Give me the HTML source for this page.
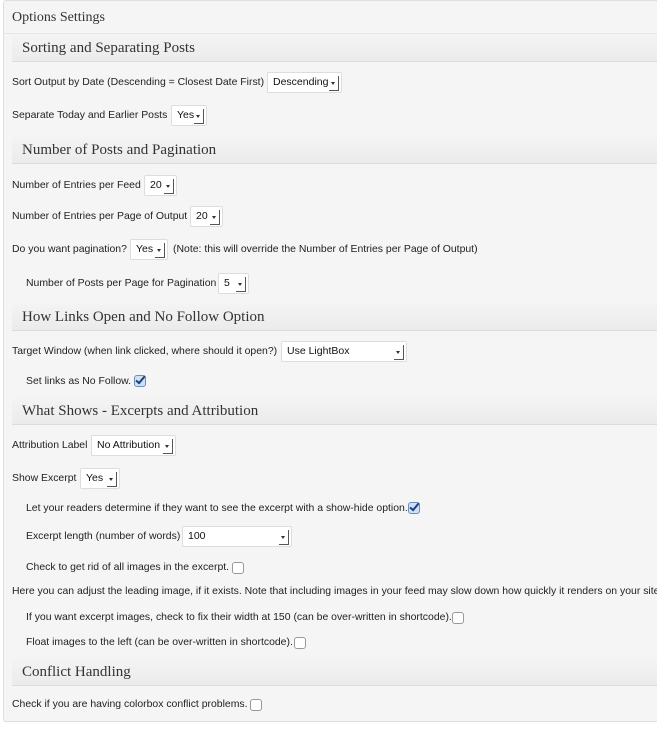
<!DOCTYPE html>
<html><head><style>
body{margin:0;width:657px;height:731px;background:#fff;position:relative;overflow:hidden;font-family:"Liberation Sans",Arial,sans-serif;font-size:10.45px;color:#222}
#box{position:absolute;left:3px;top:0;width:670px;height:720px;background:#f5f5f5;border:1px solid #dfdfdf;border-radius:3px}
.t{position:absolute;white-space:nowrap;line-height:14px;margin-top:1px}
.h{position:absolute;left:12px;width:660px;height:28px;background:linear-gradient(#f4f4f4,#ebebeb);border-bottom:1px solid #dcdcdc;font-family:"Liberation Serif",serif;font-size:15px;color:#333;line-height:28px;padding-left:10px;box-sizing:border-box}
.s{position:absolute;height:21px;background:#fff;border:1px solid #ddd;border-radius:2px;box-sizing:border-box;line-height:19px;padding-left:5px;font-size:10.5px;color:#111}
.s i{position:absolute;right:2px;top:3px;width:9px;height:14px;border-right:1px solid #555;border-bottom:1px solid #555}
.s i:after{content:"";position:absolute;left:2px;top:6px;border-left:2.5px solid transparent;border-right:2.5px solid transparent;border-top:3px solid #333}
.c{position:absolute;width:10px;height:10px;border:1px solid #999;border-radius:3px;background:#fff}
.c.k{background:#cfe0f5;border-color:#6d8fbf}
.c.k:after{content:"";position:absolute;left:3px;top:-2px;width:3px;height:8px;border-right:2px solid #1d3f7a;border-bottom:2px solid #1d3f7a;transform:rotate(40deg)}
</style></head><body>
<div id="box"></div>
<div style="position:absolute;left:3px;top:33px;width:670px;border-top:1px solid #e6e6e6"></div>
<div class="t" style="left:12px;top:9px;font-family:'Liberation Serif',serif;font-size:14px;color:#333;line-height:16px">Options Settings</div>

<div class="h" style="top:34px">Sorting and Separating Posts</div>
<div class="t" style="left:12px;top:75px">Sort Output by Date (Descending = Closest Date First)</div>
<div class="s" style="left:267px;top:72px;width:75px">Descending<i></i></div>
<div class="t" style="left:12px;top:108px">Separate Today and Earlier Posts</div>
<div class="s" style="left:171px;top:105px;width:36px">Yes<i></i></div>

<div class="h" style="top:136px">Number of Posts and Pagination</div>
<div class="t" style="left:12px;top:178px">Number of Entries per Feed</div>
<div class="s" style="left:144px;top:175px;width:33px">20<i></i></div>
<div class="t" style="left:12px;top:209px">Number of Entries per Page of Output</div>
<div class="s" style="left:190px;top:206px;width:33px">20<i></i></div>
<div class="t" style="left:12px;top:242px">Do you want pagination?</div>
<div class="s" style="left:130px;top:239px;width:38px">Yes<i></i></div>
<div class="t" style="left:173px;top:242px">(Note: this will override the Number of Entries per Page of Output)</div>
<div class="t" style="left:26px;top:276px">Number of Posts per Page for Pagination</div>
<div class="s" style="left:218px;top:273px;width:31px">5<i></i></div>

<div class="h" style="top:303px">How Links Open and No Follow Option</div>
<div class="t" style="left:12px;top:344px">Target Window (when link clicked, where should it open?)</div>
<div class="s" style="left:281px;top:341px;width:126px">Use LightBox<i></i></div>
<div class="t" style="left:26px;top:374px">Set links as No Follow.</div>
<div class="c k" style="left:134px;top:375px"></div>

<div class="h" style="top:397px">What Shows - Excerpts and Attribution</div>
<div class="t" style="left:12px;top:438px">Attribution Label</div>
<div class="s" style="left:91px;top:435px;width:85px">No Attribution<i></i></div>
<div class="t" style="left:12px;top:471px">Show Excerpt</div>
<div class="s" style="left:80px;top:468px;width:40px">Yes<i></i></div>
<div class="t" style="left:26px;top:501px">Let your readers determine if they want to see the excerpt with a show-hide option.</div>
<div class="c k" style="left:408px;top:502px"></div>
<div class="t" style="left:26px;top:529px">Excerpt length (number of words)</div>
<div class="s" style="left:182px;top:526px;width:110px">100<i></i></div>
<div class="t" style="left:26px;top:560px">Check to get rid of all images in the excerpt.</div>
<div class="c" style="left:232px;top:562px"></div>
<div class="t" style="left:12px;top:584px">Here you can adjust the leading image, if it exists. Note that including images in your feed may slow down how quickly it renders on your site,</div>
<div class="t" style="left:26px;top:610px">If you want excerpt images, check to fix their width at 150 (can be over-written in shortcode).</div>
<div class="c" style="left:452px;top:612px"></div>
<div class="t" style="left:26px;top:635px">Float images to the left (can be over-written in shortcode).</div>
<div class="c" style="left:294px;top:637px"></div>

<div class="h" style="top:658px">Conflict Handling</div>
<div class="t" style="left:12px;top:697px">Check if you are having colorbox conflict problems.</div>
<div class="c" style="left:250px;top:699px"></div>
</body></html>
